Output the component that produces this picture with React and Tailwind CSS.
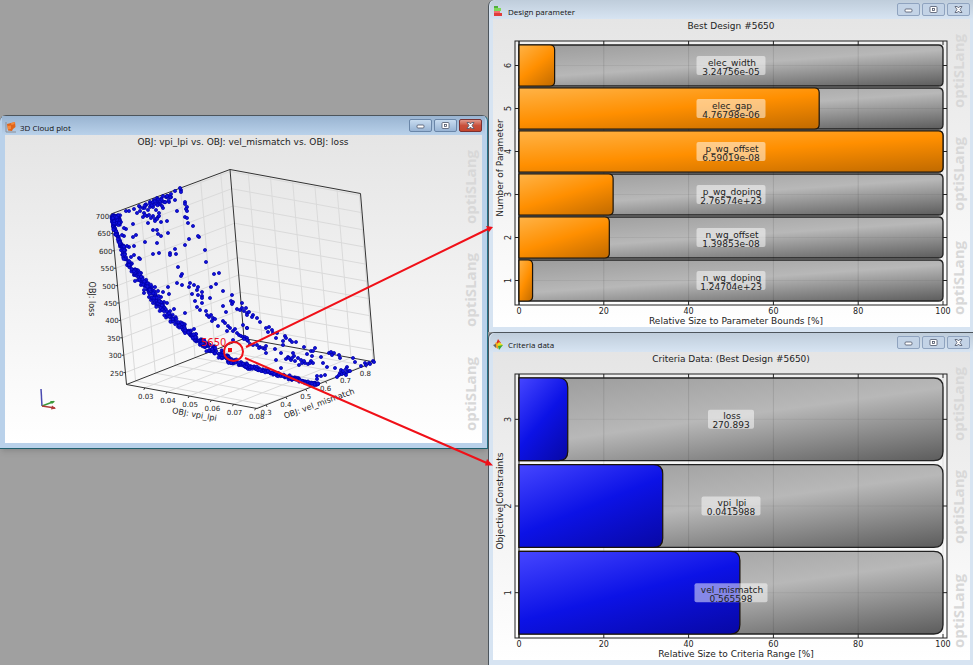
import clsx from 'clsx';

const designParameters = [
  { name: 'elec_width', value: '3.24756e-05', percent: 8.4 },
  { name: 'elec_gap', value: '4.76798e-06', percent: 70.8 },
  { name: 'p_wg_offset', value: '6.59019e-08', percent: 100 },
  { name: 'p_wg_doping', value: '2.76574e+23', percent: 22.2 },
  { name: 'n_wg_offset', value: '1.39853e-08', percent: 21.3 },
  { name: 'n_wg_doping', value: '1.24704e+23', percent: 3.2 },
];

const criteria = [
  { name: 'loss', value: '270.893', percent: 11.5, labelWidth: 46 },
  { name: 'vpi_lpi', value: '0.0415988', percent: 33.9, labelWidth: 59 },
  { name: 'vel_mismatch', value: '0.565598', percent: 52.1, labelWidth: 73 },
];

// corners of the plot cube
const A = [111, 214];
const B = [230, 169.5];
const C = [360.5, 193.5];
const D = [126.5, 384.5];
const E = [257, 408.5];
const F = [374.5, 362];
const G = [244, 338.5];

const lossTicks = [700, 650, 600, 550, 500, 450, 400, 350, 300, 250].map((label, i) => ({
  label,
  t: (2 + i * 17.4) / 170.5,
}));
const vpiTicks = ['0.03', '0.04', '0.05', '0.06', '0.07', '0.08'].map((label, i) => ({
  label,
  t: 0.14 + i * 0.17,
}));
const velTicks = ['0.3', '0.4', '0.5', '0.6', '0.7', '0.8'].map((label, i) => ({
  label,
  t: 0.077 + i * 0.169,
}));

const sparse = [
  [181, 190], [180, 188], [181, 192], [175, 191], [171, 194], [168, 196], [163, 196], [166, 197], [171, 197],
  [175, 200], [169, 202], [165, 202], [185, 202], [185, 204], [187, 207], [186, 209], [187, 211], [177, 211],
  [185, 217], [187, 218], [188, 223], [193, 226], [199, 237], [198, 236], [189, 239], [185, 245], [205, 250],
  [206, 262], [178, 267], [182, 274], [181, 276], [214, 274], [219, 273], [175, 249], [170, 253], [170, 255],
  [176, 254], [159, 253], [153, 254], [157, 243], [145, 242], [168, 233], [161, 236], [158, 234], [157, 230],
  [153, 230], [148, 223], [167, 221], [161, 222], [155, 219], [158, 217], [159, 213], [153, 216], [147, 216],
  [143, 217], [144, 213], [149, 215], [137, 213], [133, 224], [126, 229], [124, 228], [136, 235], [133, 237],
  [134, 246], [129, 247], [127, 246], [134, 255], [131, 257], [139, 258], [140, 259], [126, 211], [129, 211],
  [134, 209], [124, 236], [122, 235], [140, 207], [143, 208], [146, 205], [150, 202], [154, 200], [157, 198],
  [158, 203], [150, 207], [153, 207], [156, 210], [163, 208], [148, 210], [151, 218], [155, 221], [157, 219],
  [159, 216], [145, 215], [140, 211], [160, 204], [162, 206], [139, 206], [136, 271], [137, 270], [141, 273],
  [134, 275], [138, 280], [135, 281], [141, 285], [144, 290], [144, 293], [149, 297], [153, 303], [151, 300],
  [152, 287], [155, 287],
  [177, 283], [182, 285], [190, 283], [189, 287], [194, 285], [198, 287], [197, 290], [202, 292], [198, 295],
  [202, 296], [192, 294], [195, 301], [202, 298], [202, 303], [211, 287], [216, 284], [210, 298], [223, 291],
  [232, 295], [231, 301], [232, 304], [233, 302], [223, 306], [226, 312], [237, 309], [240, 310], [242, 303],
  [246, 308], [247, 313], [244, 311], [168, 287], [163, 292], [169, 294], [185, 313], [174, 309], [164, 302],
  [161, 297], [158, 291], [163, 305], [167, 303],
  [197, 307], [200, 310], [206, 311], [207, 315], [211, 315], [209, 317], [213, 318], [212, 321], [215, 319],
  [218, 326], [223, 321], [225, 323], [228, 326], [227, 331], [230, 328], [233, 331], [235, 329], [237, 333],
  [239, 335], [241, 336], [243, 337], [245, 337], [247, 338], [247, 328], [248, 341], [233, 340], [194, 329],
  [242, 308], [249, 312], [247, 315], [253, 315], [252, 317], [257, 318], [260, 322], [243, 325], [247, 328],
  [266, 328], [269, 327], [268, 332], [272, 330], [273, 333], [277, 333], [276, 338], [285, 336], [286, 338],
  [283, 341], [283, 345], [290, 340], [292, 342], [296, 342], [304, 347], [311, 351], [315, 348], [313, 351],
  [329, 353], [331, 352], [334, 353], [332, 355], [339, 355], [340, 358], [353, 358], [355, 362], [361, 366],
  [365, 363], [366, 365], [369, 363], [373, 361], [374, 362], [370, 364], [253, 345], [257, 345], [260, 347],
  [263, 348], [266, 346], [266, 353], [265, 349], [275, 349], [276, 360], [281, 353], [281, 368], [288, 357],
  [286, 359], [291, 360], [293, 353], [294, 356], [292, 358], [295, 361], [298, 358], [301, 360], [299, 365],
  [302, 363], [305, 363], [308, 364], [311, 361], [313, 363], [312, 356], [307, 354], [321, 357], [323, 363],
  [327, 367], [335, 368], [341, 370], [340, 373], [337, 377], [342, 374], [344, 373], [347, 372], [347, 367],
  [346, 369], [349, 371], [343, 371], [339, 375], [346, 375], [317, 376], [321, 376], [325, 375], [317, 379],
  [250, 344], [247, 340], [244, 339], [259, 348], [289, 358], [304, 361], [310, 363], [350, 371],
];

// pareto front, [x, y, spread]
const front = [
  [112, 217, 1], [114, 228, 1.5], [118, 238, 2], [122, 247, 2.5], [125, 257, 2.5], [131, 267, 3], [139, 275, 3.5],
  [146, 285, 4], [153, 293, 4.5], [158, 302, 4], [166, 312, 4], [175, 320, 3.5], [184, 328, 3.5], [192, 335, 3],
  [200, 341, 3.5], [208, 347, 4], [216, 352, 4], [226, 358, 3.5], [238, 363, 2.5], [250, 367, 2], [265, 371, 2],
  [280, 375, 2], [295, 379, 2], [310, 383, 1.5], [318, 384, 1.5],
];

function lerp(p, q, t) {
  return [p[0] + (q[0] - p[0]) * t, p[1] + (q[1] - p[1]) * t];
}

function createRandom(seed) {
  let state = seed;
  return () => {
    state = (state * 16807) % 2147483647;
    return state / 2147483647;
  };
}

function buildPoints() {
  const random = createRandom(5650);
  const points = [...sparse];
  for (let i = 0; i < front.length - 1; i += 1) {
    for (let k = 0; k < 24; k += 1) {
      const [x, y] = lerp(front[i], front[i + 1], random());
      const offset = (random() + random() - 1) * front[i][2];
      points.push([x + offset * 0.7, y - offset]);
    }
  }
  for (let k = 0; k < 55; k += 1) {
    points.push([112 + random() * 9, 215 + random() * 10]);
  }
  for (let k = 0; k < 24; k += 1) {
    const [x, y] = lerp([143, 206], [171, 195], random());
    points.push([x, y + random() * 6 - 1]);
  }
  return points;
}

const cloud = buildPoints();

function Line({ from, to, className }) {
  return <line x1={from[0]} y1={from[1]} x2={to[0]} y2={to[1]} className={className} />;
}

function Watermark() {
  return (
    <g className="fill-[#d8d8d8] font-['Open_Sans',sans-serif] text-[15px] font-bold">
      {[89, 192, 296].map((y) => (
        <text key={y} transform={`translate(471 ${y}) rotate(-90)`}>
          optiSLang
        </text>
      ))}
    </g>
  );
}

function CloudPlot() {
  const grid = 'stroke-[#dadada]';
  const edge = 'stroke-[#333]';
  return (
    <svg viewBox="0 0 477 308" className="block h-auto w-full font-['DejaVu_Sans',sans-serif]">
      <Watermark />
      <g transform="translate(-5 -135)" className="fill-[#222]">
        <text x="243" y="145" textAnchor="middle" className="text-[9px]">
          OBJ: vpi_lpi vs. OBJ: vel_mismatch vs. OBJ: loss
        </text>
        {lossTicks.map(({ label, t }) => (
          <g key={label}>
            <Line from={lerp(A, D, t)} to={lerp(B, G, t)} className={grid} />
            <Line from={lerp(B, G, t)} to={lerp(C, F, t)} className={grid} />
          </g>
        ))}
        {vpiTicks.map(({ label, t }) => (
          <g key={label}>
            <Line from={lerp(B, C, t)} to={lerp(G, F, t)} className={grid} />
            <Line from={lerp(G, F, t)} to={lerp(D, E, t)} className={grid} />
          </g>
        ))}
        {velTicks.map(({ label, t }) => (
          <g key={label}>
            <Line from={lerp(A, B, t)} to={lerp(D, G, t)} className={grid} />
            <Line from={lerp(D, G, t)} to={lerp(E, F, t)} className={grid} />
          </g>
        ))}
        {[[A, B], [B, C], [C, F], [A, D], [D, E], [E, F], [B, G], [D, G], [G, F]].map(([from, to], i) => (
          <Line key={i} from={from} to={to} className={edge} />
        ))}

        <g className="text-[7px]">
          {lossTicks.map(({ label, t }) => {
            const [x, y] = lerp(A, D, t);
            return (
              <g key={label}>
                <Line from={[x - 2, y]} to={[x, y]} className={edge} />
                <text x={x - 2} y={y + 3} textAnchor="end">
                  {label}
                </text>
              </g>
            );
          })}
          {vpiTicks.map(({ label, t }) => {
            const [x, y] = lerp(D, E, t);
            return (
              <g key={label}>
                <Line from={[x, y]} to={[x - 1, y + 2]} className={edge} />
                <text x={x + 1} y={y + 11} textAnchor="middle">
                  {label}
                </text>
              </g>
            );
          })}
          {velTicks.map(({ label, t }) => {
            const [x, y] = lerp(E, F, t);
            return (
              <g key={label}>
                <Line from={[x, y]} to={[x + 1, y + 2]} className={edge} />
                <text x={x} y={y + 10} textAnchor="middle">
                  {label}
                </text>
              </g>
            );
          })}
        </g>
        <g className="text-[8px]" textAnchor="middle">
          <text transform="translate(89 299) rotate(90)">OBJ: loss</text>
          <text transform="translate(194 417) rotate(10)">OBJ: vpi_lpi</text>
          <text transform="translate(320 406) rotate(-20)">OBJ: vel_mismatch</text>
        </g>

        <g className="fill-[#1010e0] stroke-[#0000a4] stroke-[0.7]">
          {cloud.map(([x, y], i) => (
            <circle key={i} cx={x} cy={y} r="1.6" />
          ))}
        </g>

        <g strokeWidth="1.5">
          <Line from={[42, 406]} to={[41, 389]} className="stroke-[#4a4ab0]" />
          <Line from={[42, 406]} to={[54, 401.5]} className="stroke-[#3a9a3a]" />
          <Line from={[42, 406]} to={[55, 408]} className="stroke-[#b03a3a]" />
        </g>
        <path d="M50 401l5 0l-3 3z" className="fill-[#3a9a3a]" />
        <path d="M52 405.500l4 3l-5 1z" className="fill-[#b03a3a]" />

        <text x="201" y="346" className="fill-[#f01020] text-[10px]">
          5650
        </text>
        <rect x="228" y="348" width="4" height="4" className="fill-[#f01010]" />
      </g>
    </svg>
  );
}

function barPath(x, y, width, height, radius) {
  const r = Math.min(radius, width / 2);
  return `M${x} ${y}H${x + width - r}Q${x + width} ${y} ${x + width} ${y + r}V${y + height - r}Q${x + width} ${y + height} ${x + width - r} ${y + height}H${x}Z`;
}

function BarChart({ id, title, xLabel, yLabel, bars, stops }) {
  const left = 26;
  const scale = 4.24;
  const gap = bars.length === 3 ? 4 : 2;
  const pitch = (256 + gap) / bars.length;
  const height = pitch - gap;
  return (
    <svg viewBox="0 0 477 308" className="block h-auto w-full font-['DejaVu_Sans',sans-serif]">
      <defs>
        <linearGradient id={`${id}-track`} x1="0" y1="0" x2="0.8" y2="1.14">
          <stop offset="0" stopColor="#9b9b9b" />
          <stop offset="0.48" stopColor="#b8b8b8" />
          <stop offset="1" stopColor="#5c5c5c" />
        </linearGradient>
        <linearGradient id={`${id}-bar`} x1="0" y1="0" x2="0.8" y2="1.14">
          <stop offset="0" stopColor={stops[0]} />
          <stop offset="0.5" stopColor={stops[1]} />
          <stop offset="1" stopColor={stops[2]} />
        </linearGradient>
      </defs>
      <Watermark />
      <rect x="22" y="22" width="432" height="264" className="fill-white/40 stroke-[#222]" />
      <line x1={left} y1="22" x2={left} y2="286" className="stroke-[#222]" />
      {bars.map((bar, i) => {
        const y = left + i * pitch;
        const middle = y + height / 2;
        return (
          <g key={bar.name} className="stroke-[#222]">
            <path d={barPath(left, y, 424, height, height / 9)} fill={`url(#${id}-track)`} strokeWidth="1.3" />
            <line x1={left} y1={middle} x2="450" y2={middle} className="stroke-black/5" />
            <line x1="22" y1={middle} x2={left} y2={middle} />
            <line x1="450" y1={middle} x2="454" y2={middle} />
          </g>
        );
      })}
      <g className="fill-[#222] text-[8px]" textAnchor="middle">
        {[0, 20, 40, 60, 80, 100].map((tick) => {
          const x = left + tick * scale;
          return (
            <g key={tick}>
              <line x1={x} y1="26" x2={x} y2="282" className="stroke-black/10" />
              <line x1={x} y1="22" x2={x} y2="26" className="stroke-[#222]" />
              <line x1={x} y1="282" x2={x} y2="286" className="stroke-[#222]" />
              <text x={x} y="295">
                {tick}
              </text>
            </g>
          );
        })}
      </g>
      {bars.map((bar, i) => {
        const y = left + i * pitch;
        const middle = y + height / 2;
        const labelWidth = bar.labelWidth ?? 69;
        return (
          <g key={bar.name} textAnchor="middle" className="fill-[#222] text-[9px]">
            <path
              d={barPath(left, y, bar.percent * scale, height, height / 9)}
              fill={`url(#${id}-bar)`}
              strokeWidth="1.2"
              className="stroke-[#1a1208]"
            />
            <rect
              x={238 - labelWidth / 2}
              y={middle - 9.5}
              width={labelWidth}
              height="19"
              rx="2"
              className="fill-white/50"
            />
            <text x="239" y={middle}>
              {bar.name}
            </text>
            <text x="238" y={middle + 9}>
              {bar.value}
            </text>
            <text transform={`translate(18 ${middle}) rotate(-90)`} className="text-[8px]">
              {bars.length - i}
            </text>
          </g>
        );
      })}
      <g className="fill-[#222] text-[9px]" textAnchor="middle">
        <text x="238" y="10">
          {title}
        </text>
        <text x="243" y="305">
          {xLabel}
        </text>
        <text transform="translate(10 149) rotate(-90)">{yLabel}</text>
      </g>
    </svg>
  );
}

function CloudIcon() {
  return (
    <svg viewBox="0 0 11 11" className="size-[11px]">
      <path d="M1 0V10H11" fill="none" stroke="#8a8f98" />
      <path d="M2 2L6 1L10 0L10.500 5L8 7L7 9L3 8.500Z" fill="#e0651a" />
      <path d="M6 1L10 0L9.500 2L6.500 3ZM2.500 4L6 3.500L6 7L3 7.500Z" fill="#f58a3c" />
    </svg>
  );
}

function ParameterIcon() {
  return (
    <svg viewBox="0 0 11 11" className="size-[11px]">
      <rect x="1" y="0" width="4" height="3" fill="#4fae3c" />
      <rect x="1" y="2" width="7" height="3" fill="#7ed957" />
      <rect x="1" y="5" width="6" height="3" fill="#f07070" />
      <rect x="1" y="7" width="8" height="3" fill="#e03c3c" />
    </svg>
  );
}

function CriteriaIcon() {
  return (
    <svg viewBox="0 0 11 11" className="size-[11px]">
      <path d="M5 0L8 4L3 5z" fill="#d93020" />
      <path d="M3 3L1 7L5 10L6 6z" fill="#f0a020" />
      <path d="M6 3L10 6L7 8L4 6z" fill="#e8e020" />
      <path d="M5 7L10 6L6 11z" fill="#38a838" />
      <path d="M0 6L3 5L3 9z" fill="#666" />
    </svg>
  );
}

function WindowButton({ label, active, danger, children }) {
  return (
    <button
      type="button"
      aria-label={label}
      className={clsx(
        'flex h-[13px] w-[23px] items-center justify-center rounded-xs border',
        danger && 'border-[#7a3030] bg-linear-to-b from-[#e0998c] via-[#c8503c] to-[#c4452e]',
        !danger && active && 'border-[#6a86a8] bg-linear-to-b from-[#c8dcf0] to-[#98b4d4]',
        !danger && !active && 'border-[#8fa3bf] bg-[#c3d3e6]',
      )}
    >
      <svg viewBox="0 0 9 7" className="h-[7px] w-[9px] fill-white stroke-[#4c5468] stroke-[0.8]">
        {children}
      </svg>
    </button>
  );
}

function Window({ title, icon, active, className, children }) {
  return (
    <section
      className={clsx(
        'border-[#4d555c] pb-[5px]',
        active
          ? 'rounded-t-md border-t border-r border-b border-r-[#257286] border-b-[#1f5f6c] bg-[#b9d1ea] px-[5px] shadow-md'
          : 'rounded-tl-md border-l bg-[#d7e4f2] pr-[3px] pl-1',
        className,
      )}
    >
      <header
        className={clsx(
          '-mx-[3px] flex h-[19px] items-center gap-1 px-[3px]',
          active ? 'bg-linear-to-b from-[#99b4d1] to-[#b9d1ea]' : 'rounded-tl-md bg-linear-to-b from-[#bfcddb] to-[#d7e4f2]',
        )}
      >
        <span className="pt-1">{icon}</span>
        <h2 className="flex-1 pt-1 font-['Open_Sans',sans-serif] text-[8px] leading-3 font-medium text-[#111]">{title}</h2>
        <div className="flex gap-[2px]">
          <WindowButton label="Minimize" active={active}>
            <rect x="1" y="3" width="7" height="3" rx="1" />
          </WindowButton>
          <WindowButton label="Maximize" active={active}>
            <rect x="1" y="0.500" width="7" height="6" rx="1" />
            <rect x="3.500" y="2.500" width="2" height="2" />
          </WindowButton>
          <WindowButton label="Close" active={active} danger={active}>
            <path d="M1 0.500H3.300L4.500 2L5.700 0.500H8L6 3.500L8 6.500H5.700L4.500 5L3.300 6.500H1L3 3.500Z" />
          </WindowButton>
        </div>
      </header>
      <div className="bg-linear-to-b from-[#e5e5e5] to-white">{children}</div>
    </section>
  );
}

function Arrows() {
  return (
    <svg viewBox="0 0 973 665" className="pointer-events-none absolute top-0 left-0 h-auto w-full">
      <g className="fill-none stroke-[#f01018] stroke-2">
        <circle cx="233.500" cy="351.500" r="9.500" />
        <path d="M246 347L488 229M245 358L488 463.500" />
      </g>
      <path d="M493 227L486 226L489 232ZM493 465.500L487 459L485 465.500Z" className="fill-[#f01018]" />
    </svg>
  );
}

export default function App() {
  return (
    <main className="relative grid min-h-screen grid-cols-[488fr_485fr] items-start bg-[#a0a0a0]">
      <div className="pt-[115px]">
        <Window title="3D Cloud plot" icon={<CloudIcon />} active>
          <CloudPlot />
        </Window>
      </div>
      <div>
        <Window title="Design parameter" icon={<ParameterIcon />}>
          <BarChart
            id="parameters"
            title="Best Design #5650"
            xLabel="Relative Size to Parameter Bounds [%]"
            yLabel="Number of Parameter"
            bars={designParameters}
            stops={['#ffb347', '#ff8f00', '#c06a00']}
          />
        </Window>
        <Window title="Criteria data" icon={<CriteriaIcon />} className="border-t">
          <BarChart
            id="criteria"
            title="Criteria Data: (Best Design #5650)"
            xLabel="Relative Size to Criteria Range [%]"
            yLabel="Objective|Constraints"
            bars={criteria}
            stops={['#4646ff', '#0c12e6', '#0808a4']}
          />
        </Window>
      </div>
      <Arrows />
    </main>
  );
}
